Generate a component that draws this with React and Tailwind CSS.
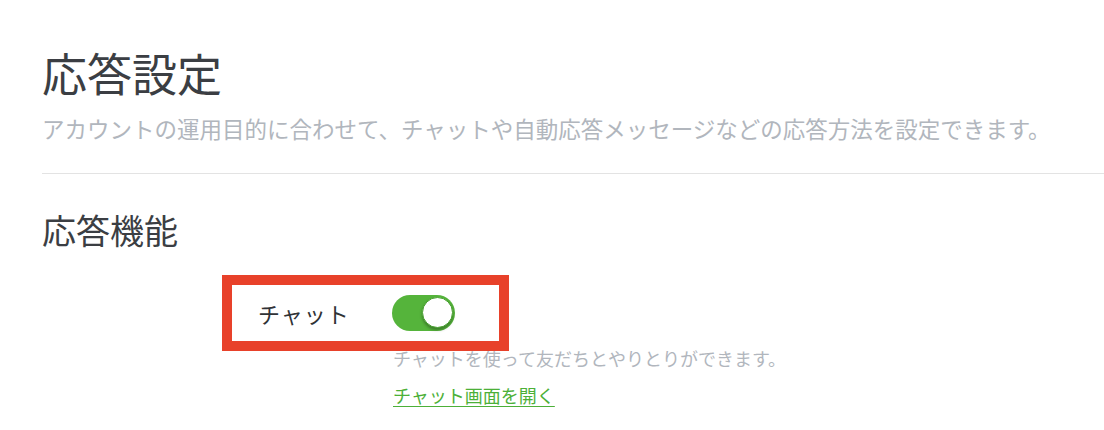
export default function App() {
  const font = { fontFamily: '"Noto Sans CJK JP", "Noto Sans", sans-serif' };
  return (
    <div className="w-[1104px] h-[430px] overflow-hidden bg-white" style={font}>
      <div className="pl-[42px] pt-[47px]">
        <h1 className="text-[45px] leading-[52px] text-[#3b3e43] font-normal">応答設定</h1>
        <p className="mt-[13px] text-[22.5px] leading-[32px] text-[#b1b6bd]">
          アカウントの運用目的に合わせて、チャットや自動応答メッセージなどの応答方法を設定できます。
        </p>
        <div className="mt-[29px] h-px bg-[#e3e3e3]" />
        <h2 className="mt-[36px] text-[34px] leading-[40px] text-[#3b3e43] font-normal">応答機能</h2>
        <div className="relative mt-[45px]">
          <div className="flex items-center ml-[216px] h-[36px]">
            <span className="w-[134px] text-[22px] leading-[30px] text-[#2f3236] tracking-[1px]">チャット</span>
            <div className="relative w-[63px] h-[36px] rounded-full bg-[#55b43b]">
              <div className="absolute right-[2px] top-[2px] w-[31px] h-[31px] rounded-full bg-white border border-[#4aa232] shadow-[0_2px_3px_rgba(0,0,0,0.3)]" />
            </div>
          </div>
          <div className="absolute left-[180px] top-[-20px] w-[287px] h-[76px] border-[10px] border-[#e8412a]" />
        </div>
        <p className="mt-[15px] ml-[351px] text-[18px] leading-[24px] text-[#b1b6bd]">
          チャットを使って友だちとやりとりができます。
        </p>
        <a className="block mt-[13px] ml-[351px] w-fit text-[18px] leading-[24px] text-[#4cb038] underline underline-offset-[3px]" href="#">
          チャット画面を開く
        </a>
      </div>
    </div>
  );
}
